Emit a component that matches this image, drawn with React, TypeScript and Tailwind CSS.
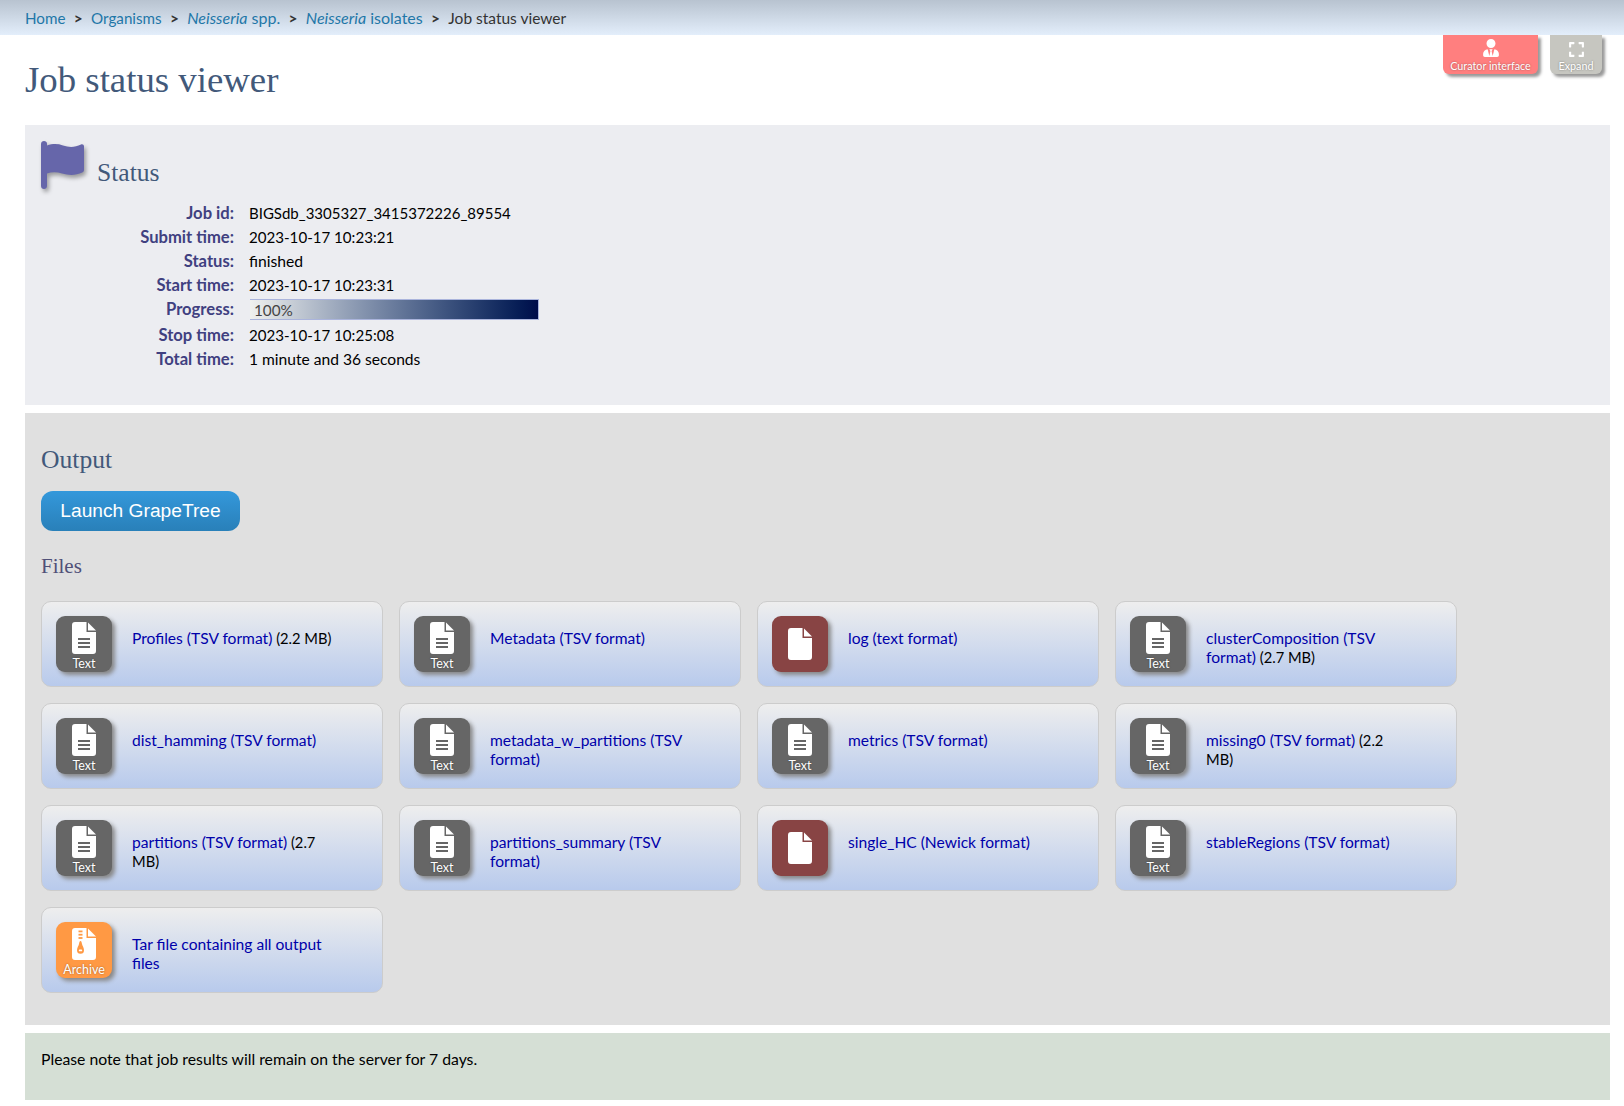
import { FaExpand, FaUserTie } from "react-icons/fa";

type FileKind = "text" | "misc" | "archive";

type OutputFile = {
  name: string;
  size?: string;
  kind: FileKind;
};

const files: OutputFile[] = [
  { name: "Profiles (TSV format)", size: "(2.2 MB)", kind: "text" },
  { name: "Metadata (TSV format)", kind: "text" },
  { name: "log (text format)", kind: "misc" },
  { name: "clusterComposition (TSV format)", size: "(2.7 MB)", kind: "text" },
  { name: "dist_hamming (TSV format)", kind: "text" },
  { name: "metadata_w_partitions (TSV format)", kind: "text" },
  { name: "metrics (TSV format)", kind: "text" },
  { name: "missing0 (TSV format)", size: "(2.2 MB)", kind: "text" },
  { name: "partitions (TSV format)", size: "(2.7 MB)", kind: "text" },
  { name: "partitions_summary (TSV format)", kind: "text" },
  { name: "single_HC (Newick format)", kind: "misc" },
  { name: "stableRegions (TSV format)", kind: "text" },
  { name: "Tar file containing all output files", kind: "archive" }
];

const statusRows = [
  { label: "Job id:", value: "BIGSdb_3305327_3415372226_89554", size: "text-[15px]" },
  { label: "Submit time:", value: "2023-10-17 10:23:21", size: "text-[15.1px]" },
  { label: "Status:", value: "finished", size: "text-[15.7px]" },
  { label: "Start time:", value: "2023-10-17 10:23:31", size: "text-[15.1px]" },
  { label: "Progress:", value: null, size: "text-[15.3px]" },
  { label: "Stop time:", value: "2023-10-17 10:25:08", size: "text-[15.1px]" },
  { label: "Total time:", value: "1 minute and 36 seconds", size: "text-[15.6px]" }
];

const FileGlyph = ({ kind }: { kind: FileKind }) => (
  <svg viewBox="0 0 24 32" className="w-6 h-8 shrink-0" fill="#fff">
    <path d="M3 0H14.500V10H24V29a3 3 0 0 1-3 3H3a3 3 0 0 1-3-3V3a3 3 0 0 1 3-3z" />
    <path d="M16 0.500L24 8.500H16z" />
    {kind === "text" && (
      <g fill="#666">
        <rect x="6" y="16" width="12" height="2" />
        <rect x="6" y="20" width="12" height="2" />
        <rect x="6" y="24" width="12" height="2" />
      </g>
    )}
    {kind === "archive" && (
      <g fill="#f94">
        <rect x="6.500" y="2.500" width="4" height="1.800" />
        <rect x="6.500" y="5.800" width="4" height="1.800" />
        <rect x="6.500" y="9.100" width="4" height="1.800" />
        <path d="M8.500 13c1 0 1.200 1.500 1.500 3 .4 1.800 2 3.800 2 6.200a3.500 3.500 0 0 1-7 0c0-2.400 1.600-4.400 2-6.200.3-1.500.5-3 1.500-3z" />
        <rect x="6.800" y="21.500" width="3.400" height="1.800" rx="0.900" fill="#fff" />
      </g>
    )}
  </svg>
);

const FileIcon = ({ kind }: { kind: FileKind }) => {
  if (kind === "misc") {
    return (
      <div className="w-14 h-14 shrink-0 rounded-[9px] bg-[#844] shadow-[3px_3px_4px_#888] flex items-center justify-center">
        <FileGlyph kind={kind} />
      </div>
    );
  }
  return (
    <div
      className={`w-14 h-14 shrink-0 rounded-[9px] shadow-[3px_3px_4px_#888] flex flex-col items-center pt-[6px] text-white text-[12.5px] leading-[16px] [text-shadow:0_0_2px_rgba(0,0,0,0.4)] ${
        kind === "archive" ? "bg-[#f94]" : "bg-[#666]"
      }`}
    >
      <FileGlyph kind={kind} />
      <span className="mt-[2px]">{kind === "archive" ? "Archive" : "Text"}</span>
    </div>
  );
};

const FileCard = ({ file }: { file: OutputFile }) => (
  <div className="w-[342px] h-[86px] flex gap-[20px] pl-[14px] pt-[14px] rounded-[10px] border border-[#ccc] bg-gradient-to-b from-[#eee] to-[#b8caec]">
    <FileIcon kind={file.kind} />
    <p className="w-[208px] pt-[13px] text-[15.6px] leading-[19px] text-black">
      <a className="text-[#0000aa]">{file.name}</a>
      {file.size && <span className="text-[14.7px]"> {file.size}</span>}
    </p>
  </div>
);

const Flag = () => (
  <svg
    viewBox="0 0 43 48"
    className="w-[43px] h-[48px] mt-[1px] shrink-0 drop-shadow-[2px_3px_2px_rgba(0,0,0,0.35)]"
    fill="#66a"
  >
    <path d="M3 0c1.700 0 3 1 3 2.500V4.500C12 2.500 17 2.800 22 4.500 28 6.500 34 6.500 40 3.500c1.500-.6 3 .2 3 1.800V29c0 1.200-.6 2-1.700 2.500C35 34.500 28 34.500 21 32.500 16 31 11 30.800 6 32.500V45c0 2-1.300 3-3 3s-3-1-3-3V3C0 1 1.300 0 3 0z" />
  </svg>
);

export default function App() {
  return (
    <div className="min-h-screen bg-white font-['Lato','Noto_Sans',sans-serif] text-[15.5px] text-black">
      <nav className="h-[35px] flex items-baseline gap-[8.3px] pl-[25px] pt-[6px] text-[15.5px] text-[#333] bg-gradient-to-b from-[#b8c3d0] to-[#e3eefb]">
        <a className="text-[#1f77a8] text-[15.2px]">Home</a>
        <span className="font-bold">&gt;</span>
        <a className="text-[#1f77a8] text-[15.2px]">Organisms</a>
        <span className="font-bold">&gt;</span>
        <a className="text-[#1f77a8] text-[16px]"><i>Neisseria</i> spp.</a>
        <span className="font-bold">&gt;</span>
        <a className="text-[#1f77a8] text-[16px]"><i>Neisseria</i> isolates</a>
        <span className="font-bold">&gt;</span>
        <span>Job status viewer</span>
      </nav>

      <div className="h-[90px] flex justify-between pl-[25px] pr-[22px]">
        <h1 className="pt-[23px] font-['Liberation_Serif',serif] text-[36.8px] leading-[44px] text-[#42597a]">
          Job status viewer
        </h1>
        <div className="flex gap-3 items-start text-white text-[10.8px] leading-[12px] [text-shadow:0_0_2px_rgba(0,0,0,0.4)]">
          <div className="w-[95px] h-[39px] flex flex-col items-center pt-1 rounded-b-md bg-[#ff7f7f] shadow-[3px_3px_3px_#999]">
            <FaUserTie className="w-[18px] h-[18px]" />
            <span className="mt-[3px]">Curator interface</span>
          </div>
          <div className="w-[52px] h-[39px] flex flex-col items-center pt-[6px] rounded-b-md bg-[#c6c6c0] shadow-[3px_3px_3px_#999]">
            <FaExpand className="w-[17px] h-[17px]" />
            <span className="mt-[2px]">Expand</span>
          </div>
        </div>
      </div>

      <section className="ml-[25px] mr-[14px] h-[280px] px-4 pt-[15px] bg-[#ecedf1]">
        <div className="flex items-start gap-[13px]">
          <Flag />
          <h2 className="pt-[18px] font-['Liberation_Serif',serif] text-[25.6px] leading-[30px] text-[#42597a]">
            Status
          </h2>
        </div>
        <dl className="mt-[12px] grid grid-cols-[193px_1fr] gap-x-[15px]">
          {statusRows.map((row) => (
            <div key={row.label} className="contents">
              <dt className={`pt-[1px] text-right font-bold text-[16.6px] text-[#404080] leading-[23px] ${row.value === null ? "h-[26px]" : ""}`}>
                {row.label}
              </dt>
              <dd className={`leading-[24px] ${row.size}`}>
                {row.value ?? (
                  <div className="mt-[2px] ml-[1px] w-[289px] h-[21px] pl-[4px] flex items-center text-[#444] border-r border-t border-b border-[#aab4dc] bg-gradient-to-r from-[#f0f1ee] to-[#000c4a]">
                    100%
                  </div>
                )}
              </dd>
            </div>
          ))}
        </dl>
      </section>

      <section className="ml-[25px] mr-[14px] mt-[8px] h-[612px] px-4 pt-[32px] bg-[#e0e0e0]">
        <h2 className="font-['Liberation_Serif',serif] text-[25.6px] leading-[30px] text-[#42597a]">Output</h2>
        <button className="mt-[16px] w-[199px] h-[40px] rounded-xl font-['Liberation_Sans',sans-serif] text-[19.2px] text-white bg-gradient-to-b from-[#3498db] to-[#2980b9]">
          Launch GrapeTree
        </button>
        <h3 className="mt-[22px] font-['Liberation_Serif',serif] text-[21px] leading-[26px] text-[#505078]">Files</h3>
        <div className="mt-[22px] flex flex-wrap gap-x-[16px] gap-y-[16px]">
          {files.map((file) => (
            <FileCard key={file.name} file={file} />
          ))}
        </div>
      </section>

      <section className="ml-[25px] mr-[14px] mt-2 h-[67px] px-4 pt-[16px] bg-[#d5dfd5] text-[15.75px] leading-[19px]">
        Please note that job results will remain on the server for 7 days.
      </section>
    </div>
  );
}
